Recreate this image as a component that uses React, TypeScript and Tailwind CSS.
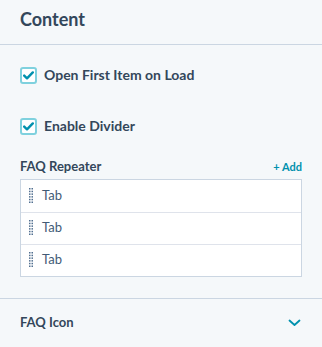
import React from 'react';

const Check: React.FC<{ label: string }> = ({ label }) => (
  <label className="flex items-center gap-[7px]">
    <span className="flex h-[17px] w-[17px] items-center justify-center rounded-[3px] border-2 border-[#7fd1de] bg-white">
      <svg width="11" height="9" viewBox="0 0 11 9" fill="none">
        <path d="M1.2 4.6 L4 7.3 L9.8 1.4" stroke="#0091ae" strokeWidth="2.4" strokeLinecap="round" strokeLinejoin="round" />
      </svg>
    </span>
    <span className="text-[14px] leading-[20px] font-bold text-[#33475b]">{label}</span>
  </label>
);

const Handle: React.FC = () => (
  <svg width="4" height="16" viewBox="0 0 4 16">
    {[0, 1, 2, 3, 4, 5].map((r) =>
      [0, 1].map((c) => (
        <rect key={`${r}-${c}`} x={c * 2.5} y={r * 2.7} width="1.5" height="1.5" fill="#516f90" />
      ))
    )}
  </svg>
);

export default function App() {
  const rows = ['Tab', 'Tab', 'Tab'];
  return (
    <div className="h-[347px] w-[322px] bg-[#f5f8fa] text-[#33475b]" style={{ fontFamily: 'Lato, "Noto Sans", sans-serif' }}>
      <div className="flex h-[45px] items-center border-b border-[#cbd6e2] px-5 pb-[6px]">
        <h2 className="text-[18px] font-bold">Content</h2>
      </div>

      <div className="px-5 pt-5">
        <Check label="Open First Item on Load" />
        <div className="mt-[31px]">
          <Check label="Enable Divider" />
        </div>

        <div className="mt-[21px] flex items-center justify-between">
          <span className="text-[13px] font-bold">FAQ Repeater</span>
          <button className="text-[11px] font-bold text-[#0091ae]">+ Add</button>
        </div>

        <div className="mt-[2px] border border-[#cbd6e2] bg-white">
          {rows.map((r, i) => (
            <div key={i} className={`flex h-[32px] items-center gap-[9px] pl-[8px] ${i > 0 ? 'border-t border-[#dfe3eb]' : ''}`}>
              <Handle />
              <span className="text-[13px] text-[#425b76]">{r}</span>
            </div>
          ))}
        </div>
      </div>

      <div className="mt-[21px] flex h-[50px] items-center justify-between border-t border-[#cbd6e2] px-5">
        <span className="text-[13px] font-bold">FAQ Icon</span>
        <svg width="13" height="8" viewBox="0 0 13 8" fill="none" className="mr-[1px]">
          <path d="M1.5 1.5 L6.5 6 L11.5 1.5" stroke="#0091ae" strokeWidth="1.8" strokeLinecap="round" strokeLinejoin="round" />
        </svg>
      </div>
    </div>
  );
}
